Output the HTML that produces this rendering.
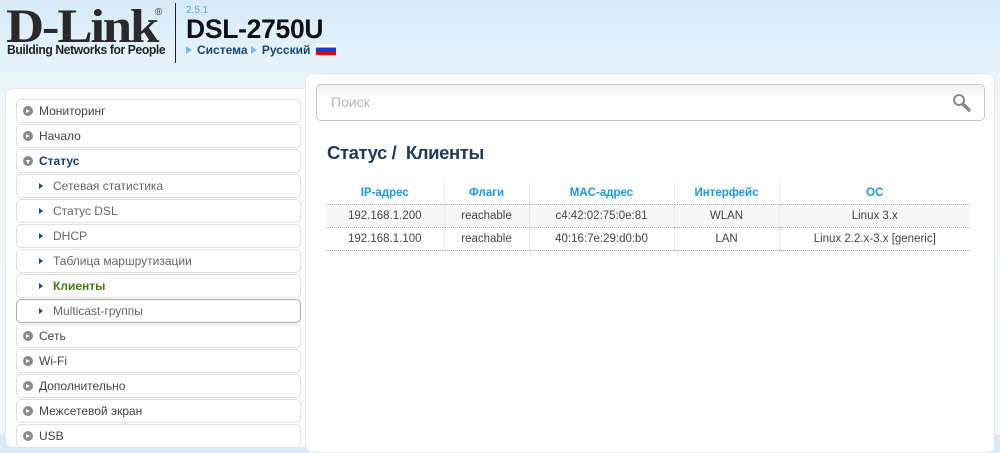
<!DOCTYPE html>
<html><head><meta charset="utf-8"><style>
*{margin:0;padding:0;box-sizing:border-box}
body{width:1000px;height:435px;overflow:hidden;background:linear-gradient(#d6eaf8 0,#e6f3fc 60px,#eef7fd 120px,#f0f8fe 435px);font-family:"Liberation Sans",sans-serif;position:relative}
.dl{position:absolute;left:6px;top:3px;font-family:"Liberation Serif",serif;font-weight:bold;font-size:48px;color:#2a2a2a;letter-spacing:-2px;line-height:48px;transform:scaleX(1.1);transform-origin:left}
.tag{position:absolute;left:7px;top:43px;font-size:12.5px;font-weight:bold;color:#222;letter-spacing:-0.4px;transform:scaleX(0.97);transform-origin:left;white-space:nowrap}
.reg{position:absolute;left:155px;top:7px;font-size:10px;color:#333}
.vline{position:absolute;left:175px;top:3px;width:1px;height:60px;background:#222}
.ver{position:absolute;left:186px;top:5px;font-size:10px;color:#6a9ccc}
.model{position:absolute;left:186px;top:14px;font-size:26.5px;font-weight:bold;color:#111;letter-spacing:-0.3px}
.links{position:absolute;left:186px;top:43px;font-size:12px;font-weight:bold;color:#1a4470}
.links i{display:inline-block;width:0;height:0;border-left:6px solid #7cbde8;border-top:4px solid transparent;border-bottom:4px solid transparent;margin-right:5px;vertical-align:0}
.flag{display:inline-block;width:20px;height:11px;background:linear-gradient(#fff 0 33%,#1a3ed8 33% 66%,#e00 66%);vertical-align:-1px;margin-left:2px}
.lp{position:absolute;left:5px;top:88px;width:305px;height:360px;background:#fff;border-radius:8px;border:1px solid #e4ebf0}
.rp{position:absolute;left:305px;top:73px;width:690px;height:380px;background:#fff;border-radius:8px;border:1px solid #e4ebf0}
.mi{position:absolute;left:16px;width:285px;height:24px;border:1px solid #e0e0e0;border-radius:5px;font-size:12px;color:#444;line-height:23px;padding-left:22px;background:#fff}
.mi .c{position:absolute;left:6px;top:6px;width:10px;height:10px;border-radius:50%;background:#8a8a8a}
.mi .c:after{content:"";position:absolute;left:3px;top:2.5px;border-left:4px solid #fff;border-top:2.5px solid transparent;border-bottom:2.5px solid transparent}
.mi .c.d:after{left:2.5px;top:3.5px;border-top:4px solid #fff;border-left:2.5px solid transparent;border-right:2.5px solid transparent;border-bottom:0}
.mi.sub{padding-left:36px;color:#666}
.mi.sub:before{content:"";position:absolute;left:22px;top:8px;border-left:4px solid #1b4e88;border-top:3px solid transparent;border-bottom:3px solid transparent}
.search{position:absolute;left:316px;top:84px;width:669px;height:37px;border:1px solid #c8c8c8;border-radius:5px;background:linear-gradient(#f2f2f2,#fff 40%);font-size:14px;color:#b5b5b5;line-height:35px;padding-left:14px}
h1{position:absolute;left:327px;top:142px;font-size:18.5px;font-weight:bold;color:#1e3a5a;letter-spacing:-0.4px}
table{position:absolute;left:326px;top:182px;width:644px;border-collapse:collapse;font-size:11.5px;color:#444;text-align:center}
th{color:#1c9be0;font-weight:bold;height:22px;border-right:1px dotted #ddd;border-bottom:1px dotted #aaa}
td{height:23px;border-right:1px dotted #ddd;border-bottom:1px dotted #aaa}
th:last-child,td:last-child{border-right:0}
tr.a td{background:#f7f7f7}
</style></head><body>
<div class="dl">D-Link</div><div class="tag">Building Networks for People</div>
<div class="reg">®</div>
<div class="vline"></div>
<div class="ver">2.5.1</div>
<div class="model">DSL-2750U</div>
<div class="links"><i></i>Система <i></i>Русский <span class="flag"></span></div>
<div class="lp"></div>
<div class="rp"></div>
<div class="mi" style="top:99px"><span class="c"></span>Мониторинг</div>
<div class="mi" style="top:124px"><span class="c"></span>Начало</div>
<div class="mi" style="top:149px;color:#1a3f6a;font-weight:bold"><span class="c d"></span>Статус</div>
<div class="mi sub" style="top:174px">Сетевая статистика</div>
<div class="mi sub" style="top:199px">Статус DSL</div>
<div class="mi sub" style="top:224px">DHCP</div>
<div class="mi sub" style="top:249px">Таблица маршрутизации</div>
<div class="mi sub" style="top:274px;color:#4a7a10;font-weight:bold">Клиенты</div>
<div class="mi sub" style="top:299px;border-color:#aaa">Multicast-группы</div>
<div class="mi" style="top:324px"><span class="c"></span>Сеть</div>
<div class="mi" style="top:349px"><span class="c"></span>Wi-Fi</div>
<div class="mi" style="top:374px"><span class="c"></span>Дополнительно</div>
<div class="mi" style="top:399px"><span class="c"></span>Межсетевой экран</div>
<div class="mi" style="top:424px"><span class="c"></span>USB</div>
<div class="search">Поиск
<svg style="position:absolute;right:12px;top:8px" width="20" height="20" viewBox="0 0 20 20"><circle cx="7" cy="7" r="5" fill="none" stroke="#888" stroke-width="2"/><path d="M11 11l6 6" stroke="#888" stroke-width="3.5" stroke-linecap="round"/></svg></div>
<h1>Статус /&nbsp; Клиенты</h1>
<table>
<tr><th style="width:118px">IP-адрес</th><th style="width:85px">Флаги</th><th style="width:145px">MAC-адрес</th><th style="width:105px">Интерфейс</th><th>ОС</th></tr>
<tr class="a"><td>192.168.1.200</td><td>reachable</td><td>c4:42:02:75:0e:81</td><td>WLAN</td><td>Linux 3.x</td></tr>
<tr><td>192.168.1.100</td><td>reachable</td><td>40:16:7e:29:d0:b0</td><td>LAN</td><td>Linux 2.2.x-3.x [generic]</td></tr>
</table>
</body></html>
